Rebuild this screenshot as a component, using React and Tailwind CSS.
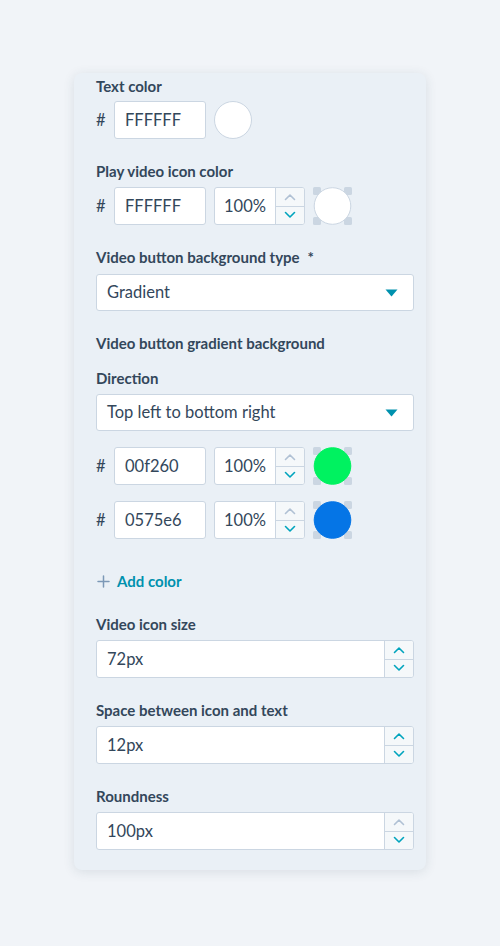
import React from "react";

const font = { fontFamily: "Lato, 'Noto Sans', sans-serif" };

function ChevronUp({ active }) {
  return (
    <svg width="12" height="8" viewBox="0 0 12 8" fill="none">
      <path d="M1.5 6.5 L6 2 L10.5 6.5" stroke={active ? "#00a4bd" : "#b0c1d4"} strokeWidth="1.6" strokeLinecap="round" strokeLinejoin="round" />
    </svg>
  );
}
function ChevronDown({ active }) {
  return (
    <svg width="12" height="8" viewBox="0 0 12 8" fill="none">
      <path d="M1.5 1.5 L6 6 L10.5 1.5" stroke={active ? "#00a4bd" : "#b0c1d4"} strokeWidth="1.6" strokeLinecap="round" strokeLinejoin="round" />
    </svg>
  );
}

function Stepper({ upActive = false, downActive = true }) {
  return (
    <div className="flex flex-col w-[29px] border-l border-[#cbd6e2] bg-[#f5f8fa]">
      <div className="flex-1 flex items-center justify-center border-b border-[#cbd6e2]">
        <ChevronUp active={upActive} />
      </div>
      <div className="flex-1 flex items-center justify-center">
        <ChevronDown active={downActive} />
      </div>
    </div>
  );
}

function Label({ children, className = "" }) {
  return (
    <div className={`h-5 flex items-center text-[15px] font-bold text-[#33475b] ${className}`}>{children}</div>
  );
}

function HexInput({ value }) {
  return (
    <div className="w-[92px] h-[38px] bg-white border border-[#cbd6e2] rounded-[3px] flex items-center pl-[10px] text-[16.5px] text-[#33475b]">
      {value}
    </div>
  );
}

function PctInput({ upActive = false }) {
  return (
    <div className="w-[91px] h-[38px] bg-white border border-[#cbd6e2] rounded-[3px] flex overflow-hidden">
      <div className="flex-1 flex items-center pl-[9px] text-[16.5px] text-[#33475b]">100%</div>
      <Stepper upActive={upActive} />
    </div>
  );
}

function CheckerSwatch({ color, border }) {
  return (
    <svg width="39" height="38" viewBox="0 0 39 38">
      <rect x="0" y="0" width="8" height="8" rx="1.5" fill="#cbd6e2" />
      <rect x="31" y="0" width="8" height="8" rx="1.5" fill="#cbd6e2" />
      <rect x="0" y="30" width="8" height="8" rx="1.5" fill="#cbd6e2" />
      <rect x="31" y="30" width="8" height="8" rx="1.5" fill="#cbd6e2" />
      <circle cx="19.5" cy="19" r="18.3" fill={color} stroke={border ? "#cbd6e2" : color} strokeWidth="1" />
    </svg>
  );
}

function ColorRow({ hex, color, border }) {
  return (
    <div className="flex items-center h-[38px]">
      <div className="w-[18px] text-[16.5px] text-[#33475b]">#</div>
      <HexInput value={hex} />
      <div className="ml-[8px]">
        <PctInput />
      </div>
      <div className="ml-[8px]">
        <CheckerSwatch color={color} border={border} />
      </div>
    </div>
  );
}

function Select({ value }) {
  return (
    <div className="h-[37px] bg-white border border-[#cbd6e2] rounded-[3px] flex items-center justify-between pl-[10px] pr-[15px] text-[16.5px] text-[#33475b]">
      <span>{value}</span>
      <svg width="13" height="8" viewBox="0 0 13 8">
        <path d="M0.5 0.5 H12.5 L6.5 7.5 Z" fill="#0091ae" />
      </svg>
    </div>
  );
}

function NumberInput({ value, upActive }) {
  return (
    <div className="h-[38px] bg-white border border-[#cbd6e2] rounded-[3px] flex overflow-hidden">
      <div className="flex-1 flex items-center pl-[10px] text-[16.5px] text-[#33475b]">{value}</div>
      <Stepper upActive={upActive} />
    </div>
  );
}

export default function App() {
  return (
    <div className="min-h-[946px] w-[500px] bg-[#f1f4f8] pt-[73px]" style={font}>
      <div className="ml-[74px] w-[352px] bg-[#eaf0f6] rounded-[8px] shadow-[0_2px_12px_rgba(45,62,80,0.12)] pl-[22px] pr-[12px] pt-[3px] pb-[20px]">
        <Label>Text color</Label>
        <div className="flex items-center mt-[5px] h-[38px]">
          <div className="w-[18px] text-[16.5px] text-[#33475b]">#</div>
          <HexInput value="FFFFFF" />
          <div className="ml-[8px] w-[38px] h-[38px] rounded-full bg-white border border-[#cbd6e2]" />
        </div>

        <Label className="mt-[22px]">Play video icon color</Label>
        <div className="mt-[6px]">
          <ColorRow hex="FFFFFF" color="#ffffff" border />
        </div>

        <Label className="mt-[22px]">
          Video button background type <span className="ml-[8px]">*</span>
        </Label>
        <div className="mt-[7px]">
          <Select value="Gradient" />
        </div>

        <Label className="mt-[22px]">Video button gradient background</Label>
        <Label className="mt-[15px]">Direction</Label>
        <div className="mt-[6px]">
          <Select value="Top left to bottom right" />
        </div>

        <div className="mt-[16px]">
          <ColorRow hex="00f260" color="#00f260" />
        </div>
        <div className="mt-[16px]">
          <ColorRow hex="0575e6" color="#0575e6" />
        </div>

        <div className="mt-[32px] h-5 flex items-center">
          <svg width="13" height="13" viewBox="0 0 13 13" className="ml-[1px]">
            <path d="M6.5 1 V12 M1 6.5 H12" stroke="#7c98b6" strokeWidth="1.5" strokeLinecap="round" />
          </svg>
          <span className="ml-[7px] text-[15px] font-bold text-[#0091ae]">Add color</span>
        </div>

        <Label className="mt-[23px]">Video icon size</Label>
        <div className="mt-[6px]">
          <NumberInput value="72px" upActive />
        </div>

        <Label className="mt-[22px]">Space between icon and text</Label>
        <div className="mt-[6px]">
          <NumberInput value="12px" upActive />
        </div>

        <Label className="mt-[22px]">Roundness</Label>
        <div className="mt-[6px]">
          <NumberInput value="100px" upActive={false} />
        </div>
      </div>
    </div>
  );
}
